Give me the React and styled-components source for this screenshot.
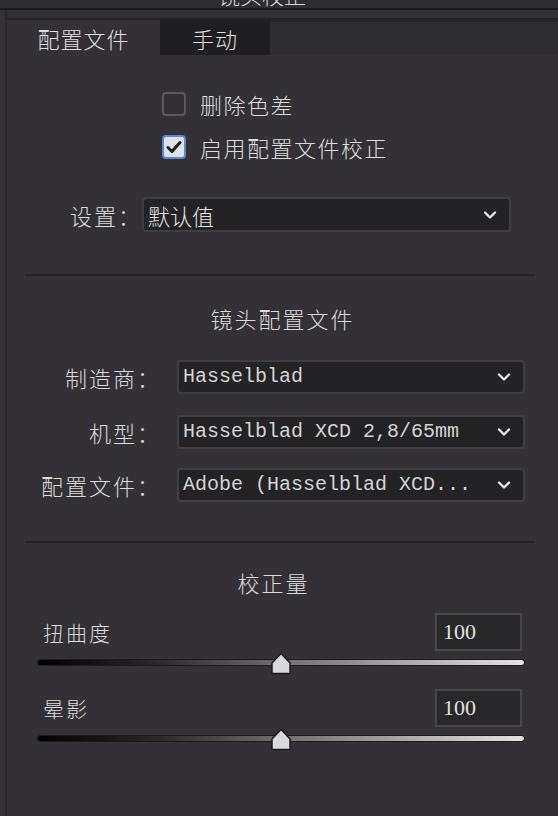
import styled, { createGlobalStyle } from "styled-components";

const Global = createGlobalStyle`
    html, body { margin: 0; padding: 0; background: #333135; }
    * { box-sizing: border-box; }
`;

const cjk = `"Noto Sans CJK SC", "Noto Sans", sans-serif`;

const Page = styled.div`
    width: 558px;
    height: 816px;
    overflow: hidden;
    display: flex;
    flex-direction: column;
    background: #333135;
    color: #dcdcdc;
    font-family: ${cjk};
`;

const TitleBar = styled.div`
    height: 10px;
    overflow: hidden;
    background: #2e2d30;
    border-bottom: 2px solid #1c1b1e;
`;

const TitleText = styled.div`
    margin-top: -21px;
    padding-left: 218px;
    font-size: 22px;
    line-height: 30px;
    font-weight: 300;
    color: #d6d6d6;
`;

const Frame = styled.div`
    flex: 1;
    display: flex;
    flex-direction: column;
    margin-left: 5px;
    border-left: 2px solid #272629;
`;

const Strip = styled.div`
    height: 10px;
    background: #302f32;
    border-bottom: 2px solid #242326;
`;

const Tabs = styled.div`
    display: flex;
    height: 35px;
    background: #333135;
`;

const Tab = styled.div`
    width: ${p => p.$w}px;
    display: flex;
    align-items: center;
    justify-content: center;
    font-size: 22px;
    line-height: 30px;
    font-weight: 300;
    letter-spacing: 1px;
    background: ${p => (p.$active ? "#333135" : "#1f1e21")};
    color: #dedede;
`;

const TabFill = styled.div`
    flex: 1;
    background: #2e2d30;
    border-top: 2px solid #262528;
`;

const Body = styled.div`
    display: flex;
    flex-direction: column;
`;

const Checks = styled.div`
    display: flex;
    flex-direction: column;
    gap: 13px;
    padding: 34px 0 0 155px;
`;

const CheckRow = styled.div`
    display: flex;
    align-items: center;
    gap: 14px;
    height: 30px;
    font-size: 22px;
    line-height: 30px;
    font-weight: 300;
    letter-spacing: 1.5px;
`;

const Box = styled.div`
    width: 24px;
    height: 24px;
    border-radius: 4px;
    border: 2px solid ${p => (p.$checked ? "#5b86d6" : "#5a595d")};
    background: ${p => (p.$checked ? "#dfe2ea" : "transparent")};
    display: flex;
    align-items: center;
    justify-content: center;
`;

const FieldRow = styled.div`
    display: flex;
    align-items: center;
    margin-top: ${p => p.$mt || 0}px;
`;

const Label = styled.div`
    width: ${p => p.$w}px;
    text-align: right;
    padding-right: ${p => p.$pr}px;
    font-size: 22px;
    line-height: 30px;
    font-weight: 300;
    letter-spacing: 2px;
    color: #dadada;
`;

const Select = styled.div`
    width: ${p => p.$w}px;
    height: ${p => p.$h || 34}px;
    background: #232225;
    border: 2px solid #3f3e42;
    border-radius: 4px;
    display: flex;
    align-items: center;
    justify-content: space-between;
    padding: 0 12px 0 4px;
    font-family: ${p => (p.$mono ? `"Liberation Mono", monospace` : cjk)};
    font-size: ${p => (p.$mono ? 20 : 22)}px;
    line-height: 30px;
    font-weight: 300;
    color: ${p => (p.$mono ? "#d4d4d4" : "#e2e2e2")};
    white-space: nowrap;
`;

const Divider = styled.div`
    height: 2px;
    margin: ${p => p.$mt}px 23px 0 18px;
    background: #232225;
`;

const Heading = styled.div`
    margin-top: ${p => p.$mt}px;
    text-align: center;
    padding-right: ${p => p.$pr}px;
    font-size: 22px;
    line-height: 30px;
    font-weight: 300;
    letter-spacing: 2px;
    color: #dadada;
`;

const SliderBlock = styled.div`
    display: flex;
    flex-direction: column;
    margin: ${p => p.$mt}px 33px 0 30px;
`;

const SliderHead = styled.div`
    display: flex;
    align-items: center;
    justify-content: space-between;
    padding-left: 6px;
    padding-right: 3px;
    font-size: 21px;
    line-height: 30px;
    font-weight: 300;
    letter-spacing: 2px;
`;

const Num = styled.div`
    width: 87px;
    height: 38px;
    background: #28272a;
    border: 2px solid #48474b;
    display: flex;
    align-items: center;
    padding-left: 6px;
    font-family: "Liberation Serif", serif;
    font-size: 22px;
    color: #e0e0e0;
    letter-spacing: 0;
`;

const Track = styled.div`
    position: relative;
    height: 7px;
    margin-top: ${p => p.$mt}px;
    border-radius: 4px;
    border: 1px solid #1b1a1c;
    background: linear-gradient(to right, #000 0%, #2a2a2a 25%, #6e6e6e 50%, #a8a8a8 75%, #e4e4e4 100%);
`;

const Thumb = styled.svg`
    position: absolute;
    left: 50%;
    top: -8px;
    transform: translateX(-50%);
`;

const Chevron = () => (
    <svg width="14" height="10" viewBox="0 0 14 10">
        <path d="M2 2.5 L7 7.5 L12 2.5" fill="none" stroke="#e6e6e6" strokeWidth="2.4" strokeLinecap="round" strokeLinejoin="round" />
    </svg>
);

function Slider({ label, value, trackTop, mt }) {
    return (
        <SliderBlock $mt={mt}>
            <SliderHead>
                <span>{label}</span>
                <Num>{value}</Num>
            </SliderHead>
            <Track $mt={trackTop}>
                <Thumb width="22" height="23" viewBox="0 0 22 23">
                    <path d="M11 1.5 L20 11 L20 21.5 L2 21.5 L2 11 Z" fill="#d9d8dc" stroke="#1c1b1e" strokeWidth="1.5" strokeLinejoin="round" />
                </Thumb>
            </Track>
        </SliderBlock>
    );
}

export default function App() {
    return (
        <Page>
            <Global />
            <TitleBar>
                <TitleText>镜头校正</TitleText>
            </TitleBar>
            <Frame>
                <Strip />
                <Tabs>
                    <Tab $w={153} $active>配置文件</Tab>
                    <Tab $w={110}>手动</Tab>
                    <TabFill />
                </Tabs>
                <Body>
                    <Checks>
                        <CheckRow>
                            <Box />
                            <span>删除色差</span>
                        </CheckRow>
                        <CheckRow>
                            <Box $checked>
                                <svg width="16" height="14" viewBox="0 0 16 14">
                                    <path d="M2 7.5 L6 11.5 L14 2.5" fill="none" stroke="#1d1c20" strokeWidth="3" strokeLinecap="round" strokeLinejoin="round" />
                                </svg>
                            </Box>
                            <span>启用配置文件校正</span>
                        </CheckRow>
                    </Checks>

                    <FieldRow $mt={35}>
                        <Label $w={135} $pr={0}>设置：</Label>
                        <Select $w={369} $h={35}>
                            <span>默认值</span>
                            <Chevron />
                        </Select>
                    </FieldRow>

                    <Divider $mt={42} />
                    <Heading $mt={27} $pr={0}>镜头配置文件</Heading>

                    <FieldRow $mt={27}>
                        <Label $w={170} $pr={16}>制造商：</Label>
                        <Select $w={348} $mono>
                            <span>Hasselblad</span>
                            <Chevron />
                        </Select>
                    </FieldRow>
                    <FieldRow $mt={21}>
                        <Label $w={170} $pr={16}>机型：</Label>
                        <Select $w={348} $mono>
                            <span>Hasselblad XCD 2,8/65mm</span>
                            <Chevron />
                        </Select>
                    </FieldRow>
                    <FieldRow $mt={19}>
                        <Label $w={170} $pr={16}>配置文件：</Label>
                        <Select $w={348} $mono>
                            <span>Adobe (Hasselblad XCD...</span>
                            <Chevron />
                        </Select>
                    </FieldRow>

                    <Divider $mt={39} />
                    <Heading $mt={24} $pr={18}>校正量</Heading>

                    <Slider label="扭曲度" value="100" mt={16} trackTop={8} />
                    <Slider label="晕影" value="100" mt={23} trackTop={8} />
                </Body>
            </Frame>
        </Page>
    );
}
